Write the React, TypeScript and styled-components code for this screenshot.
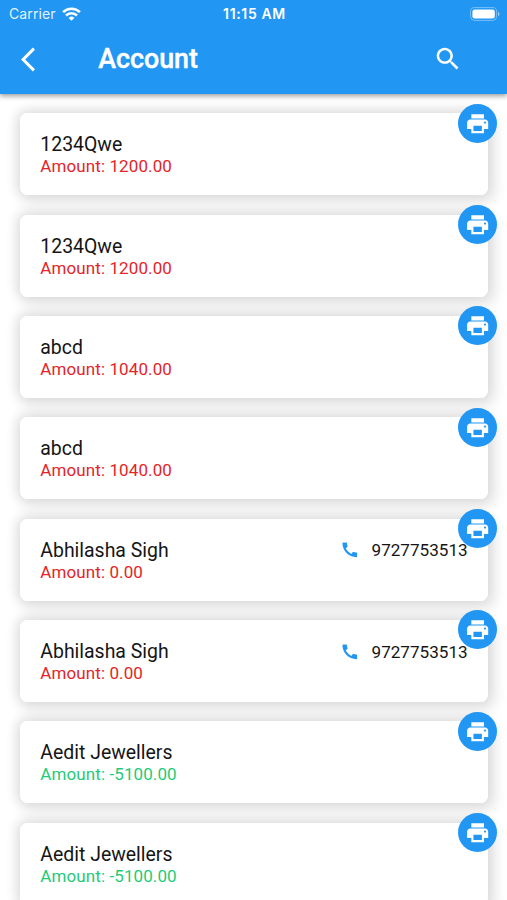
import React from "react";
import styled, { createGlobalStyle } from "styled-components";

const BLUE = "#2196f3";

const GlobalStyle = createGlobalStyle`
  * { box-sizing: border-box; }
  html, body { margin: 0; height: 100%; overflow: hidden; background: #fff; }
  body { font-family: Roboto, sans-serif; }
  svg { display: block; }
`;

const Screen = styled.div`
  height: 900px;
  overflow: hidden;
  display: flex;
  flex-direction: column;
  background: #fff;
`;

const Header = styled.header`
  flex: none;
  height: 94px;
  position: relative;
  z-index: 1;
  color: #fff;
  background: ${BLUE};
  box-shadow: 0 2px 5px rgba(0, 0, 0, 0.4);
`;

const StatusBar = styled.div`
  height: 27px;
  padding: 0 7px 0 9px;
  display: grid;
  grid-template-columns: 1fr auto 1fr;
  align-items: center;
  font-family: Inter, sans-serif;
  line-height: 27px;
`;

const Carrier = styled.div`
  display: flex;
  align-items: center;
  gap: 6px;
  font-size: 14px;
  letter-spacing: 0.1px;
  color: rgba(255, 255, 255, 0.9);
`;

const Clock = styled.div`
  font-size: 14px;
  font-weight: 600;
  letter-spacing: 0.65px;
`;

const BatterySlot = styled.div`
  display: flex;
  justify-content: flex-end;
`;

const TitleBar = styled.div`
  height: 64px;
  padding: 0 44px 0 20.7px;
  display: flex;
  align-items: center;
`;

const Title = styled.h1`
  margin: 0 0 0 63.5px;
  flex: 1;
  font-size: 26.8px;
  font-weight: 500;
  line-height: 30px;
  -webkit-text-stroke: 0.4px #fff;
`;

const List = styled.main`
  padding: 19.4px 19.4px 0 20.3px;
  display: flex;
  flex-direction: column;
  gap: 19.35px;
`;

const Card = styled.article`
  position: relative;
  flex: none;
  height: 82px;
  padding: 20px 20px 0;
  display: flex;
  justify-content: space-between;
  border-radius: 7.5px;
  background: #fff;
`;

const Shade = styled.div`
  position: absolute;
  inset: 0;
  z-index: -1;
  border-radius: 7.5px;
  box-shadow: 3px 3px 13px 4px rgba(0, 0, 0, 0.12), -3px -3px 12px 2px rgba(0, 0, 0, 0.05);
`;

const Stack = styled.div`
  position: relative;
  z-index: 0;
`;

const Name = styled.div`
  font-size: 19.45px;
  line-height: 23px;
  color: #151515;
`;

const Amount = styled.div<{ $credit: boolean }>`
  font-size: 17px;
  line-height: 20.5px;
  letter-spacing: 0.1px;
  color: ${(p) => (p.$credit ? "#1fcb76" : "#e52427")};
`;

const Phone = styled.div`
  height: 23px;
  display: flex;
  align-items: center;
  gap: 11.5px;
  font-size: 17.1px;
  color: #151515;
`;

const PrintButton = styled.button`
  position: absolute;
  top: -9.7px;
  right: -9.5px;
  width: 39px;
  height: 39px;
  padding: 0;
  border: 0;
  border-radius: 50%;
  display: grid;
  place-items: center;
  background: ${BLUE};
`;

const Icon = ({ d, size, fill = "#fff" }: { d: string; size: number; fill?: string }) => (
  <svg width={size} height={size} viewBox="0 0 24 24" fill={fill}>
    <path d={d} />
  </svg>
);

const SEARCH =
  "M15.5 14h-.79l-.28-.27C15.41 12.59 16 11.11 16 9.5 16 5.91 13.09 3 9.5 3S3 5.91 3 9.5 5.91 16 9.5 16c1.61 0 3.09-.59 4.23-1.57l.27.28v.79l5 4.99L20.49 19l-4.99-5zm-6 0C7.01 14 5 11.99 5 9.5S7.01 5 9.5 5 14 7.01 14 9.5 11.99 14 9.5 14z";
const BACK = "M11.67 3.87L9.9 2.1 0 12l9.9 9.9 1.77-1.77L3.54 12z";
const PRINT =
  "M19 8H5c-1.66 0-3 1.34-3 3v6h4v4h12v-4h4v-6c0-1.66-1.34-3-3-3zm-3 11H8v-5h8v5zm3-7c-.55 0-1-.45-1-1s.45-1 1-1 1 .45 1 1-.45 1-1 1zm-1-9H6v4h12V3z";
const CALL =
  "M20.01 15.38c-1.23 0-2.42-.2-3.53-.56-.35-.12-.74-.03-1.01.24l-1.57 1.97c-2.83-1.35-5.48-3.9-6.89-6.83l1.95-1.66c.27-.28.35-.67.24-1.02-.37-1.11-.56-2.3-.56-3.53 0-.54-.45-.99-.99-.99H4.19C3.65 3 3 3.24 3 3.99 3 13.28 10.73 21 20.01 21c.71 0 .99-.63.99-1.18v-3.45c0-.54-.45-.99-.99-.99z";

const Wifi = () => (
  <svg width="19" height="14" viewBox="0 0 19 14" fill="none" stroke="#fff" strokeWidth="2.6">
    <path d="M1.1 5.2a11.9 11.9 0 0 1 16.8 0" />
    <path d="M4 8.5a7.8 7.8 0 0 1 11 0" />
    <path d="M9.5 13.8 6.6 10.9a4.1 4.1 0 0 1 5.8 0z" fill="#fff" stroke="none" />
  </svg>
);

const Battery = () => (
  <svg width="30" height="14" viewBox="0 0 30 14">
    <rect x="0.6" y="0.6" width="26" height="12.8" rx="4" fill="none" stroke="#fff" strokeOpacity="0.4" />
    <rect x="2.4" y="2.4" width="22.4" height="9.2" rx="2.4" fill="#fff" />
    <path d="M28 4.8c2 .7 2 3.7 0 4.4z" fill="#fff" fillOpacity="0.5" />
  </svg>
);

type Account = { name: string; amount: string; phone?: string };

const accounts: Account[] = [
  { name: "1234Qwe", amount: "1200.00" },
  { name: "1234Qwe", amount: "1200.00" },
  { name: "abcd", amount: "1040.00" },
  { name: "abcd", amount: "1040.00" },
  { name: "Abhilasha Sigh", amount: "0.00", phone: "9727753513" },
  { name: "Abhilasha Sigh", amount: "0.00", phone: "9727753513" },
  { name: "Aedit Jewellers", amount: "-5100.00" },
  { name: "Aedit Jewellers", amount: "-5100.00" },
];

export default function App() {
  return (
    <Screen>
      <GlobalStyle />
      <Header>
        <StatusBar>
          <Carrier>
            Carrier
            <Wifi />
          </Carrier>
          <Clock>11:15 AM</Clock>
          <BatterySlot>
            <Battery />
          </BatterySlot>
        </StatusBar>
        <TitleBar>
          <svg width="14" height="29" viewBox="0 0 11.67 24" fill="#fff">
            <path d={BACK} />
          </svg>
          <Title>Account</Title>
          <Icon d={SEARCH} size={29.8} />
        </TitleBar>
      </Header>
      <Stack>
        <List>
          {accounts.map((a, i) => (
            <Card key={i}>
              <Shade />
              <div>
                <Name>{a.name}</Name>
                <Amount $credit={a.amount.startsWith("-")}>Amount: {a.amount}</Amount>
              </div>
              {a.phone && (
                <Phone>
                  <Icon d={CALL} size={19.6} fill={BLUE} />
                  {a.phone}
                </Phone>
              )}
              <PrintButton aria-label="Print">
                <Icon d={PRINT} size={25.3} />
              </PrintButton>
            </Card>
          ))}
        </List>
      </Stack>
    </Screen>
  );
}
